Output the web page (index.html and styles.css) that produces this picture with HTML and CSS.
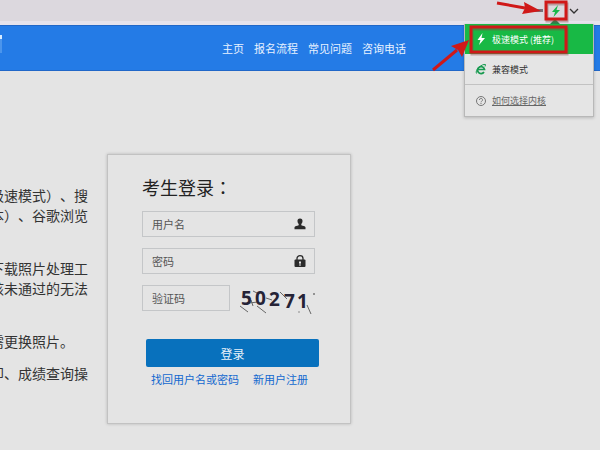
FILE: index.html
```html
<!DOCTYPE html>
<html lang="zh-CN">
<head>
  <meta charset="UTF-8">
  <meta name="viewport" content="width=device-width, initial-scale=1">
  <title>考生登录</title>
  <link rel="stylesheet" href="styles.css">
</head>
<body>

  <div class="toolbar">
    <div class="toolbar-end">
      <span class="dots"></span>
      <button class="mode-button" type="button" aria-label="极速模式">
        <svg width="10" height="12" viewBox="0 0 10 12"><path d="M7 0 1 7h3L2.5 12 9 5H5.500z" fill="#18b94a"/></svg>
      </button>
      <button class="arrow-button" type="button" aria-label="更多">
        <svg width="10" height="6" viewBox="0 0 10 6"><path d="M1 1l4 4 4-4" fill="none" stroke="#333" stroke-width="1.300"/></svg>
      </button>
    </div>
  </div>

  <header class="header">
    <span class="logo-end"></span>
    <nav class="nav">
      <a href="#">主页</a>
      <a href="#">报名流程</a>
      <a href="#">常见问题</a>
      <a href="#">咨询电话</a>
    </nav>
  </header>

  <main class="main">
    <section class="notice">
      <p>极速模式<span class="mark" lang="zh-TW">）</span>、搜<br>本<span class="mark" lang="zh-TW">）</span>、谷歌浏览</p>
      <p>下载照片处理工<br>核未通过的无法</p>
      <p class="short">需更换照片。</p>
      <p class="short">印、成绩查询操</p>
    </section>

    <form class="login">
      <h2>考生登录<span class="mark" lang="zh-TW">：</span></h2>
      <div class="field">
        <input type="text" placeholder="用户名" aria-label="用户名">
        <svg class="field-icon" width="12" height="12" viewBox="0 0 12 12"><path d="M6 0.500C4.200 0.500 3.300 1.700 3.500 3.300 3.600 4.700 4.200 5.400 4.700 6V7.200C3 7.900 0.800 8 0.500 9.200V11.300h11V9.200C11.200 8 9 7.900 7.300 7.200V6C7.800 5.400 8.400 4.700 8.500 3.300 8.700 1.700 7.800 0.500 6 0.500z" fill="#2b2b2b"/></svg>
      </div>
      <div class="field">
        <input type="password" placeholder="密码" aria-label="密码">
        <svg class="field-icon" width="12" height="12" viewBox="0 0 12 12"><path d="M3 5V3.500a3 2.800 0 0 1 6 0V5" fill="none" stroke="#2b2b2b" stroke-width="1.300"/><rect x="0.500" y="4.500" width="11" height="7.500" rx="1" fill="#2b2b2b"/><path d="M5 6.500h2v1.500l-.5.500V11h-1V8.500L5 8z" fill="#e4e4e4"/></svg>
      </div>
      <div class="code-row">
        <input type="text" placeholder="验证码" aria-label="验证码">
        <svg class="captcha" width="78" height="30" viewBox="0 0 78 30">
          <g stroke="#666" stroke-width="1" fill="none">
            <path d="M2 23l8 6M19 23l9 7M15 8l6 3M28 15l6 2M42 9l7 7M69 22l4 9M11 20l9-1M13 17l2 6"/>
          </g>
          <g fill="#252336" font-family="Open Sans, sans-serif" font-weight="bold" font-size="19">
            <text x="3" y="22">5</text>
            <text x="17" y="22">0</text>
            <text x="31" y="23">2</text>
            <text x="46" y="25">7</text>
            <text x="59" y="25">1</text>
          </g>
          <circle cx="76" cy="11" r="1" fill="#777"/>
          <circle cx="61" cy="29" r="1" fill="#aaa"/>
        </svg>
      </div>
      <button class="submit" type="submit">登录</button>
      <div class="links">
        <a href="#">找回用户名或密码</a>
        <a href="#">新用户注册</a>
      </div>
    </form>
  </main>

  <!-- menú del modo de navegación -->
  <div class="menu">
    <a class="menu-item active" href="#">
      <svg width="12" height="12" viewBox="0 0 12 12"><path d="M7.500 0 2.500 7h3L4 12l6-7H6.500z" fill="#fff"/></svg>
      <span>极速模式 (推荐)</span>
    </a>
    <a class="menu-item" href="#">
      <svg width="12" height="12" viewBox="0 0 12 12"><path d="M9 9A3.500 3.500 0 1 1 9.500 6.500H3" fill="none" stroke="#189b50" stroke-width="1.700"/><path d="M1.500 10.500C-.5 7 7 .5 10.500 1.500l-.5 2" fill="none" stroke="#189b50"/></svg>
      <span>兼容模式</span>
    </a>
    <a class="menu-item help" href="#">
      <svg width="12" height="12" viewBox="0 0 12 12"><circle cx="6" cy="6" r="4.500" fill="none" stroke="#777"/><path d="M4.500 5a1.500 1.500 0 1 1 2.200 1.200Q6 6.600 6 7.300M6 8v1" fill="none" stroke="#777"/></svg>
      <span>如何选择内核</span>
    </a>
  </div>

  <svg class="marks" width="180" height="80" viewBox="0 0 180 80">
    <g fill="none" stroke="#8a4040" stroke-opacity=".4" stroke-width="3">
      <rect x="127" y="4" width="20" height="17"/>
      <rect x="52" y="29" width="95" height="25"/>
    </g>
    <g fill="none" stroke="#d01818" stroke-width="3">
      <rect x="126" y="2" width="20" height="17"/>
      <rect x="51" y="27" width="95" height="25"/>
    </g>
    <path d="M77 3L105 8" stroke="#d01818" stroke-width="3"/>
    <path d="M104 2L121 11 102 14 105 8z" fill="#d01818"/>
    <path d="M13 70L37 50" stroke="#d01818" stroke-width="3"/>
    <path d="M31 46L49 40 42 57 38 50z" fill="#d01818"/>
  </svg>

</body>
</html>
```

FILE: styles.css
```css
* {
  margin: 0;
  padding: 0;
  box-sizing: border-box;
}

body {
  position: relative;
  min-height: 100vh;
  font-family: "Noto Sans CJK SC", sans-serif;
  text-spacing-trim: space-all;
  background-color: #e4e4e4;
  color: #333;
  overflow-x: hidden;
}

a {
  text-decoration: none;
}

button {
  border: none;
  background: none;
  font-family: inherit;
  cursor: pointer;
}

.mark {
  font-family: "Noto Sans CJK TC", sans-serif;
}

.toolbar {
  display: flex;
  justify-content: flex-end;
  height: 25px;
  padding-right: 11px;
  background-color: #dcd8de;
  border-bottom: 4px solid #e6e3ec;
}

.toolbar-end {
  display: flex;
  align-items: center;
  gap: 8px;
  padding-right: 10px;
}

.dots {
  width: 8px;
  height: 3px;
  background-color: #77727a;
}

.mode-button,
.arrow-button {
  display: flex;
}

.header {
  display: flex;
  align-items: center;
  height: 46px;
  background-color: #247be6;
  border-top: 1px solid #2067c8;
  border-bottom: 1px solid #2067c8;
}

.logo-end {
  width: 2px;
  height: 18px;
  margin-bottom: 8px;
  border-top: 4px solid #d8ecff;
  background-color: #4b95ec;
}

.nav {
  display: flex;
  gap: 10px;
  margin-left: 220px;
}

.nav a {
  color: #e8f2ff;
  font-size: 11px;
  line-height: 16px;
}

.main {
  display: flex;
  align-items: flex-start;
  gap: 19px;
  padding-top: 83px;
}

.notice {
  flex: none;
  margin-left: -10px;
  padding-top: 31px;
  white-space: nowrap;
  font-size: 14px;
  line-height: 20px;
}

.notice p {
  margin-bottom: 33px;
}

.notice .short {
  margin-bottom: 12px;
}

.login {
  width: 244px;
  padding: 20px 30px 36px 34px;
  border: 1px solid #c2c2c2;
  box-shadow: 0 0 3px rgba(0, 0, 0, 0.2);
}

.login h2 {
  margin-bottom: 12px;
  color: #222;
  font-size: 18px;
  font-weight: 400;
  line-height: 24px;
}

.field {
  display: flex;
  align-items: center;
  width: 173px;
  height: 26px;
  margin-bottom: 11px;
  padding-right: 8px;
  border: 1px solid #c4c6c8;
}

.login input {
  flex: 1;
  min-width: 0;
  height: 24px;
  padding: 0 9px;
  border: none;
  outline: none;
  background: none;
  font-family: inherit;
  font-size: 11px;
}

.login input::placeholder {
  color: #555;
}

.code-row {
  display: flex;
  align-items: center;
  gap: 8px;
  height: 26px;
  margin-bottom: 28px;
}

.login .code-row input {
  flex: none;
  width: 88px;
  height: 26px;
  border: 1px solid #c4c6c8;
}

.captcha {
  flex: none;
  overflow: visible;
}

.submit {
  width: 173px;
  height: 28px;
  margin-left: 4px;
  border-radius: 2px;
  background-color: #0871bd;
  color: #e8f2fa;
  font-size: 12px;
}

.links {
  display: flex;
  gap: 14px;
  margin: 4px 0 0 9px;
  white-space: nowrap;
}

.links a {
  color: #1268cf;
  font-size: 11px;
  line-height: 16px;
}

.menu {
  position: absolute;
  top: 24px;
  right: 6px;
  width: 130px;
  background-color: #e5e5e5;
  border: 1px solid #b8b8b8;
  border-top: none;
  box-shadow: 0 1px 3px rgba(0, 0, 0, 0.2);
}

.menu::before {
  content: "";
  position: absolute;
  top: -5px;
  right: 33px;
  border: 5px solid transparent;
  border-top: none;
  border-bottom-color: #23894a;
}

.menu-item {
  display: flex;
  align-items: center;
  gap: 5px;
  height: 30px;
  padding-left: 10px;
  color: #333;
  font-size: 9px;
}

.menu-item.active {
  background-color: #18b945;
  color: #fff;
}

.menu-item.help {
  border-top: 1px solid #c2c2c2;
  height: 32px;
  color: #666;
  text-decoration: underline;
}

.marks {
  position: absolute;
  top: 0;
  right: 0;
  pointer-events: none;
}
```
